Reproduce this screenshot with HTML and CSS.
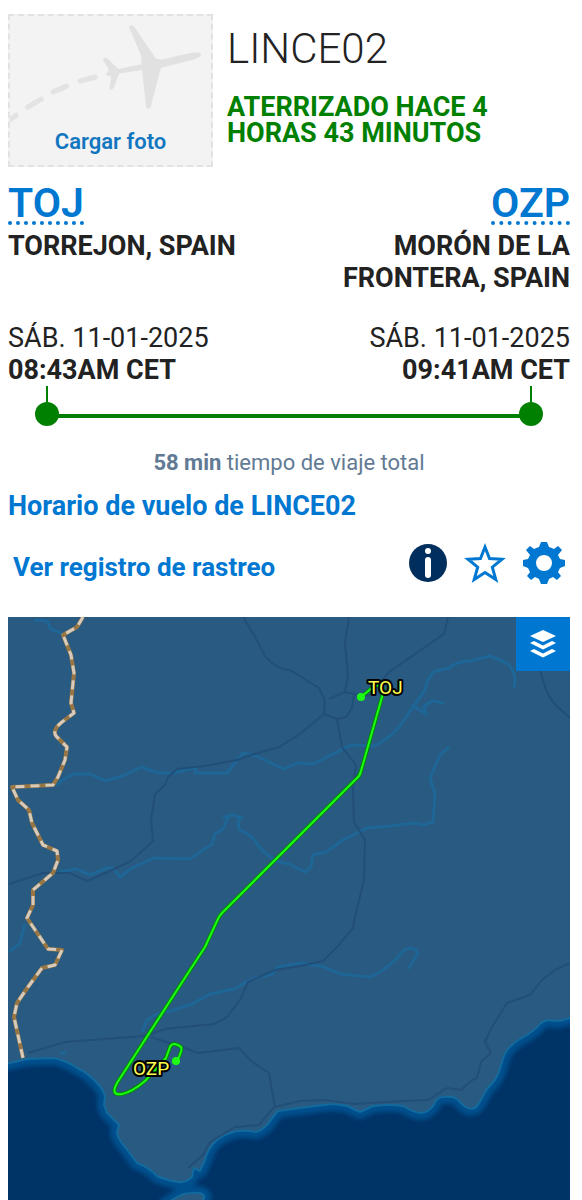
FILE: index.html
```html
<!DOCTYPE html>
<html lang="es">
  <head>
    <meta charset="UTF-8" />
    <meta name="viewport" content="width=device-width, initial-scale=1.0" />
    <title>LINCE02 - Seguimiento de vuelo</title>
    <link rel="stylesheet" href="styles.css">
  </head>
  <body>
    <!-- Flight header -->
    <header class="flight-header">
      <a class="photo-upload" href="#foto">
        <svg class="photo-plane" viewBox="24 44 615 330" aria-hidden="true">
          <path d="M24 361L42 348M78 323L119 299M156 276L197 259M239 243L284 231" fill="none" stroke="#e3e3e3" stroke-width="16" stroke-linecap="round" />
          <path d="M388 77Q394 67 405 78L470 174L488 177L583 156Q607 153 609 162Q607 171 585 178L486 202L476 238L455 320Q450 334 441 324L428 209L358 220L341 264Q334 274 328 266L334 229L317 224L327 209L308 176Q314 167 325 176L355 206L427 192L425 165Z" fill="#e1e1e1" />
        </svg>
        <span>Cargar foto</span>
      </a>
      <div class="flight-title">
        <h1>LINCE02</h1>
        <p class="flight-status">ATERRIZADO HACE 4 HORAS 43 MINUTOS</p>
      </div>
    </header>

    <!-- Route -->
    <section class="route">
      <div class="airport">
        <a class="airport-code" href="#toj">TOJ</a>
        <p class="airport-city">TORREJON, SPAIN</p>
      </div>
      <div class="airport airport-right">
        <a class="airport-code" href="#ozp">OZP</a>
        <p class="airport-city">MORÓN DE LA<br />FRONTERA, SPAIN</p>
      </div>
      <div class="airport-time">
        <p>SÁB. 11-01-2025</p>
        <p><strong>08:43AM CET</strong></p>
      </div>
      <div class="airport-time airport-right">
        <p>SÁB. 11-01-2025</p>
        <p><strong>09:41AM CET</strong></p>
      </div>
    </section>

    <div class="timeline">
      <div class="timeline-stop"></div>
      <div class="timeline-bar"></div>
      <div class="timeline-stop"></div>
    </div>
    <p class="duration"><strong>58 min</strong> tiempo de viaje total</p>

    <a class="schedule-link" href="#horario">Horario de vuelo de LINCE02</a>

    <!-- Actions -->
    <div class="actions">
      <a class="log-link" href="#registro">Ver registro de rastreo</a>
      <button class="icon-btn" aria-label="Información">
        <svg width="38" height="38" viewBox="0 0 38 38">
          <circle cx="19" cy="19" r="19" fill="#002f5d" />
          <circle cx="19" cy="7" r="3" fill="#fff" />
          <path d="M19 16V31" stroke="#fff" stroke-width="6" stroke-linecap="round" />
        </svg>
      </button>
      <button class="icon-btn" aria-label="Favorito">
        <svg width="42" height="42" viewBox="0 0 42 42">
          <path d="M21 5L25.5 16.5L38 17.2L28.3 25.2L31.8 37.5L21 30.6L10.2 37.5L13.7 25.2L4 17.2L16.5 16.5Z" fill="none" stroke="#0078d2" stroke-width="3" />
        </svg>
      </button>
      <button class="icon-btn" aria-label="Configuración">
        <svg width="42" height="42" viewBox="0 0 42 42">
          <path fill="#0078d2" fill-rule="evenodd" d="M18 0H24L26 5Q29 6 31 7L35 4L39 8L35 13Q36 15 37 17L42 18V24L37 26Q36 28 35 30L38 34L34 38L30 35Q28 36 26 37L24 42H18L16 37Q14 36 12 35L8 38L4 34L7 30Q6 28 5 26L0 24V18L5 17Q6 15 7 13L3 8L7 4L11 7Q13 6 16 5ZM21 13A8 8 0 1 0 21 29A8 8 0 1 0 21 13Z" />
        </svg>
      </button>
    </div>

    <!-- Map -->
    <section class="map">
      <svg class="map-canvas" viewBox="8 617 562 583" role="img" aria-label="Mapa del vuelo de TOJ a OZP">
        <defs>
          <filter id="soft" x="-5%" y="-5%" width="110%" height="110%">
            <feGaussianBlur stdDeviation="2" />
          </filter>
          <path id="land" d="M-20 597H600V1012L570 1018Q562 1021 557 1021C550 1020 546 1019 540 1024C534 1032 528 1034 520 1039C510 1045 504 1052 502 1062Q499 1074 495 1080L487 1089L478 1105Q472 1112 464 1106L457 1099Q453 1096 443 1097Q437 1097 433 1106Q428 1113 420 1113Q413 1112 403 1106Q390 1104 373 1106L360 1112L347 1106Q335 1103 323 1105L300 1108L278 1111Q272 1118 268 1124Q260 1132 255 1132C248 1130 242 1131 237 1131Q225 1134 217 1140Q208 1148 205 1160L200 1171L194 1168L192 1177Q186 1183 178 1182Q166 1180 157 1176Q150 1168 137 1163L125 1147Q117 1138 117 1132L119 1125L107 1113L104 1105L105 1097Q104 1090 97 1083Q88 1073 77 1068Q62 1058 50 1058L27 1059L-20 1070Z" />
          <path id="africa" d="M165 1205L175 1198Q183 1193 192 1193Q205 1192 204 1198L201 1205Z" />
          <path id="border" d="M83 617L77 627L63 635L71 655L74 673L71 703L74 713L62 722Q52 730 56 736L67 747L65 760L58 777L53 785L12 787L18 800L29 810L32 823L43 845L57 851L58 860L53 873L33 890L33 905L27 918L48 949L62 950L55 965L42 968L28 987L17 1003L14 1017L23 1058" />
          <path id="track" d="M361 697L373 687Q386 681 382 697L361 771Q360 776 356 779L222 913Q219 916 217 921L205 947L190 970L117 1083Q110 1096 122 1094Q132 1092 145 1081L157 1068L166 1058L170 1047Q173 1041 181 1047Q183 1049 177 1061" />
        </defs>
        <rect x="8" y="617" width="562" height="583" fill="#003366" />
        <g class="map-shore" filter="url(#soft)">
          <use href="#land" />
          <use href="#africa" />
        </g>
        <g class="map-land">
          <use href="#land" />
          <use href="#africa" />
        </g>

        <!-- Rivers -->
        <g class="map-rivers">
          <path d="M34 620L47 621L51 629L63 634M57 785Q66 776 75 774L90 774L106 781L125 775L141 767L158 773L174 773L196 767L195 773L227 773L243 753L256 756L284 769L297 763L313 764L343 749L351 745L373 746Q387 741 400 726L413 707L425 690Q428 676 435 671L449 668Q458 661 470 661L490 656Q502 661 508 664Q514 669 515 680L514 688" />
          <path d="M412 705L426 714L424 706L432 701L444 703M423 712L427 703" />
          <path d="M59 872L76 869L90 875L107 868L113 868L120 877L132 868L154 858L190 859L212 844L215 834L223 829L228 818L224 817L233 815L242 818L238 820L239 829L252 837L262 850L275 861L289 864L305 872L311 867L313 855L326 852L343 840L367 828L390 826L415 823L422 825L433 822L435 794L430 778L440 755L449 747" />
          <path d="M142 1032L147 1020Q158 1012 170 1011L192 1004L210 994L234 989L252 979L272 974L278 967L302 963L324 967L340 974L370 977Q384 971 395 960L404 950Q414 945 418 953L408 969" />
          <path d="M25 924L20 943L9 952M60 1053H66" />
        </g>

        <!-- Roads -->
        <g class="map-roads">
          <path d="M243 617L254 635L265 656Q275 669 290 670L319 688L325 701L324 714L337 719L346 717L352 708L354 694L345 692L329 699M345 692L348 675L345 643L349 617M354 694L369 696L389 672L444 634L448 617" />
          <path d="M324 714L300 734L279 747L251 755L237 760L204 766L177 769L168 777L165 785L155 794L151 821L153 841L131 861L108 872L87 881L70 873L43 873L9 884M337 719L342 747L356 765L353 788L354 822L365 840L364 880L355 917L353 928L338 946L323 961L300 966L275 970L248 982L240 1000L227 1017L214 1024L165 1029L145 1036L65 1042L28 1053" />
          <path d="M540 669Q546 698 559 708L570 718M151 1037L163 1041L179 1046L198 1053L239 1048L251 1061L269 1073L275 1107L300 1101L324 1100L355 1104L403 1101L428 1100L447 1088L461 1090L472 1080L477 1078L481 1062L491 1053L485 1042L492 1027L507 1003L530 995L542 980L555 970L570 963M274 1107L259 1125L235 1127L210 1142L203 1155L188 1168" />
        </g>

        <!-- Border -->
        <use class="map-border" href="#border" />
        <use class="map-border-dash" href="#border" />

        <!-- Track -->
        <use class="map-track-edge" href="#track" />
        <use class="map-track" href="#track" />
        <circle class="map-end" cx="361" cy="697" r="4" />
        <circle class="map-end" cx="176" cy="1061" r="4" />
        <text class="map-label" x="368" y="694">TOJ</text>
        <text class="map-label" x="133" y="1075">OZP</text>
      </svg>
      <button class="layers-btn" aria-label="Capas">
        <svg width="26" height="28" viewBox="0 0 26 28" fill="#fff">
          <path d="M13 0L26 6L13 12L0 6Z" />
          <path d="M0 13L4 11L13 15.5L22 11L26 13L13 19.5Z" />
          <path d="M0 21L4 19L13 23.5L22 19L26 21L13 27.5Z" />
        </svg>
      </button>
    </section>
  </body>
</html>
```

FILE: styles.css
```css
body {
  font-family: Roboto, "Liberation Sans", sans-serif;
  margin: 0;
  padding: 14px 12px 0 8px;
  background: #fff;
  color: #222;
}
h1,
p {
  margin: 0;
}
a {
  color: #0078d2;
  text-decoration: none;
}
button {
  padding: 0;
  border: none;
  background: none;
  cursor: pointer;
}
svg {
  display: block;
}

/* Flight header */
.flight-header {
  display: flex;
  gap: 14px;
}
.photo-upload {
  flex: 0 0 205px;
  box-sizing: border-box;
  height: 153px;
  border: 2px dashed #e2e2e2;
  background: #f3f3f3;
  color: #1176c0;
  font-size: 22px;
  line-height: 36px;
  font-weight: 600;
  text-align: center;
}
.photo-plane {
  width: 100%;
}
.flight-title h1 {
  font-size: 42px;
  line-height: 70px;
  font-weight: 300;
}
.flight-status {
  max-width: 300px;
  margin-top: 10px;
  color: #008000;
  font-size: 27px;
  line-height: 26px;
  font-weight: 700;
}

/* Route */
.route {
  display: grid;
  grid-template-columns: 1fr 1fr;
  row-gap: 28px;
  margin-top: 18px;
  font-size: 27px;
  line-height: 32px;
}
.route strong,
.airport-city {
  font-weight: 700;
}
.airport-right {
  text-align: right;
}
.airport-code {
  display: inline-block;
  border-bottom: 4px dotted #0078d2;
  font-size: 41px;
  line-height: 36px;
  font-weight: 600;
}
.airport-city {
  margin-top: 5px;
}
.airport-time {
  font-weight: 400;
}

/* Timeline */
.timeline {
  display: flex;
  align-items: flex-end;
  margin: 0 27px;
}
.timeline-stop {
  width: 24px;
}
.timeline-stop::before {
  content: "";
  display: block;
  width: 2px;
  height: 16px;
  margin: 0 auto;
  background: #008000;
}
.timeline-stop::after {
  content: "";
  display: block;
  height: 24px;
  border-radius: 50%;
  background: #008000;
}
.timeline-bar {
  flex: 1;
  height: 4px;
  margin: 0 -2px 8px;
  background: #008000;
}
.duration {
  margin-top: 22px;
  color: #627a94;
  font-size: 22px;
  line-height: 30px;
  text-align: center;
}

/* Links and actions */
.schedule-link,
.log-link {
  line-height: 32px;
  font-weight: 700;
}
.schedule-link {
  display: block;
  margin-top: 12px;
  font-size: 27px;
}
.log-link {
  margin-right: auto;
  padding-top: 8px;
  font-size: 26px;
}
.actions {
  display: flex;
  align-items: center;
  gap: 17px;
  margin: 20px 5px 33px;
}

/* Map */
.map {
  position: relative;
}
.map-canvas {
  width: 100%;
}
.map-shore {
  fill: none;
  stroke: #00508d;
  stroke-width: 14;
  stroke-linejoin: round;
}
.map-land {
  fill: #295a82;
  stroke: #116b9e;
  stroke-width: 2;
  stroke-linejoin: round;
}
.map-rivers,
.map-roads,
.map-border,
.map-border-dash,
.map-track,
.map-track-edge {
  fill: none;
  stroke-linejoin: round;
}
.map-rivers {
  stroke: #1b6a9c;
  stroke-width: 3;
  opacity: 0.8;
}
.map-roads {
  stroke: #214e78;
  stroke-width: 2;
  opacity: 0.9;
}
.map-border {
  stroke: #987744;
  stroke-width: 4;
}
.map-border-dash {
  stroke: #d6cbbd;
  stroke-width: 3;
  stroke-dasharray: 9 6;
}
.map-track-edge {
  stroke: #008a00;
  stroke-width: 4;
}
.map-track {
  stroke: #1cff14;
  stroke-width: 2;
}
.map-end {
  fill: #1cff14;
}
.map-label {
  fill: #ffff50;
  stroke: #000;
  stroke-width: 4;
  stroke-linejoin: round;
  paint-order: stroke;
  font-size: 19px;
}
.layers-btn {
  position: absolute;
  top: 0;
  right: 0;
  display: flex;
  align-items: center;
  justify-content: center;
  width: 54px;
  height: 54px;
  background: #0078d2;
}
```
